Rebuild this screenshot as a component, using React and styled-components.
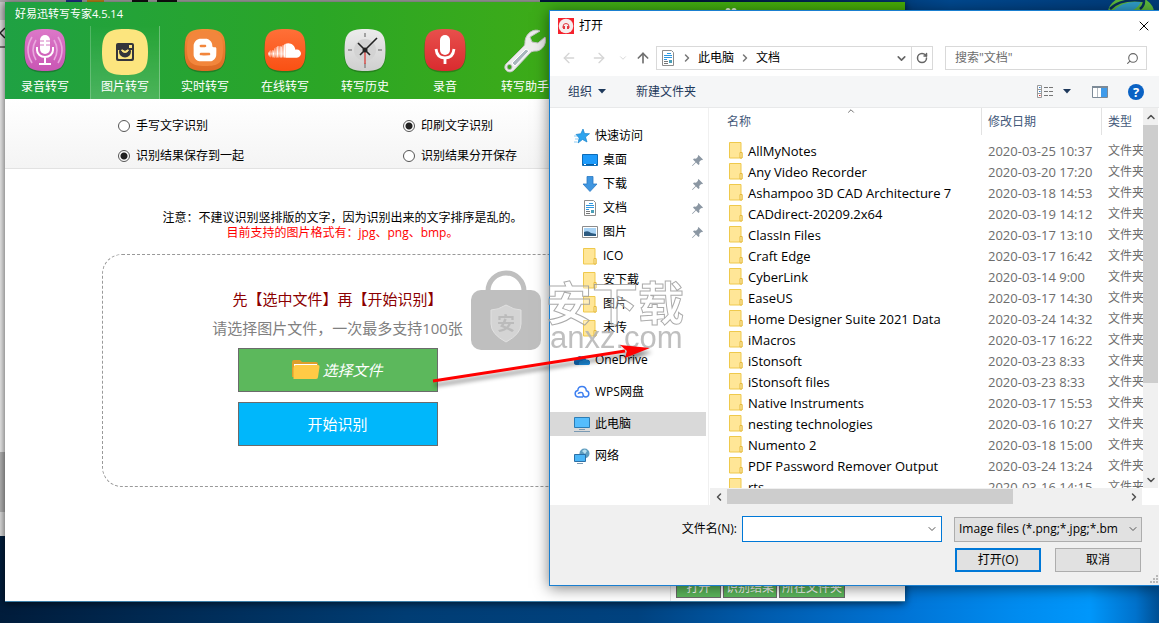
import React from 'react';
import styled, { createGlobalStyle } from 'styled-components';
import { FaBloggerB, FaSoundcloud } from 'react-icons/fa';
import { ArrowLeft, ArrowRight, ArrowUp, ChevronDown, ChevronLeft, ChevronRight, ChevronUp, RotateCw, Search, X } from 'lucide-react';

const GlobalStyle = createGlobalStyle`
  * {
    box-sizing: border-box;
  }

  body {
    margin: 0;
    background: #00234d;
    font-family: 'Open Sans', 'Noto Sans CJK SC', sans-serif;
    font-size: 12px;
    line-height: 16px;
    color: #000;
  }

  button, input, select {
    font: inherit;
    color: inherit;
    margin: 0;
    padding: 0;
  }

  svg {
    display: block;
    flex: none;
  }
`;

const Desktop = styled.div`
  position: relative;
  min-height: 100vh;
  overflow: hidden;
  background:
    linear-gradient(90deg, #001c3b 0%, #002850 12%, #003d74 35%, #00427f 55%, #005cae 66%, #0074d6 78%, #008cf0 88%, #0097fb 94%, #0072cc 98%, #004f93 100%) bottom / 100% 40% no-repeat,
    linear-gradient(90deg, #001c46 0%, #001c46 60%, #00488e 82%, #003a78 100%);
`;

/* windows */

const BackWindow = styled.div`
  position: absolute;
  left: 0;
  top: 0;
  width: 540px;
  height: 536px;
  background: linear-gradient(#c8c8c8 0 20px, #e4e4e4 20px 46px, #777 46px 48px, #ededed 48px 452px, #b4b4b4 452px 512px, #ddd 512px 536px);
`;

const BackStrip = styled.div`
  height: 2px;
  margin-bottom: 22px;
  background: linear-gradient(90deg, #a9a9a9 0 66px, #22308c 66px 82px, #a9a9a9 82px 87px, #c48a1c 87px 104px, #a9a9a9 104px 132px, #111 132px 148px, #a9a9a9 148px 157px, #111 157px 177px, #a9a9a9 177px);
`;

const Orb = styled.svg`
  position: absolute;
  right: 4px;
  top: 0;
`;

const AppWindow = styled.main`
  position: absolute;
  left: 5px;
  right: 254px;
  top: 2px;
  bottom: 21px;
  display: flex;
  flex-direction: column;
  background: #fff;
  border-bottom: 1px solid #3d7fa8;
  box-shadow: 0 1px 8px rgba(0, 0, 0, 0.7);
`;

const AppHeader = styled.header`
  background: linear-gradient(90deg, #1fa143, #2ba626 35%, #3dab18 60%, #47ac06);
  color: #fff;
`;

const AppTitle = styled.div`
  display: flex;
  align-items: center;
  justify-content: space-between;
  height: 24px;
  padding: 0 168px 0 10px;
  font-size: 11px;
`;

const Tabs = styled.nav`
  display: flex;
  gap: 10px;
  padding-left: 5px;
`;

const Tab = styled.button`
  width: 70px;
  height: 73px;
  padding-top: 3px;
  border: 0;
  border-left: 1px solid ${(p) => (p.$active ? 'rgba(255, 255, 255, 0.2)' : 'transparent')};
  border-right: 1px solid ${(p) => (p.$active ? 'rgba(255, 255, 255, 0.3)' : 'transparent')};
  background: ${(p) => (p.$active ? 'linear-gradient(rgba(255, 255, 255, 0), rgba(255, 255, 255, 0.18))' : 'none')};
  display: flex;
  flex-direction: column;
  align-items: center;
  white-space: nowrap;
`;

const TabIcon = styled.span`
  height: 50px;
`;

const Options = styled.form`
  display: grid;
  grid-template-columns: 285px 285px;
  align-content: start;
  row-gap: 14px;
  height: 70px;
  padding: 19px 0 0 113px;
  background: linear-gradient(#fff, #f4f4f4);
  border-bottom: 1px solid #e2e2e2;
`;

const Option = styled.label`
  display: flex;
  align-items: center;
  gap: 6px;
  height: 16px;
`;

const Radio = styled.input`
  appearance: none;
  width: 12px;
  height: 12px;
  border: 1px solid #555;
  border-radius: 50%;
  background: ${(p) => (p.defaultChecked ? 'radial-gradient(circle, #222 0 3px, #fff 4px)' : '#fff')};
`;

const Work = styled.div`
  flex: 1;
  display: flex;
`;

const WorkPane = styled.section`
  flex: 1;
  padding-top: 41px;
  border-right: 1px solid #e6e6e6;
`;

const Note = styled.p`
  margin: 0;
  padding-left: 10px;
  text-align: center;
  line-height: 15px;
  color: ${(p) => (p.$warn ? '#f00' : '#000')};
`;

const DropArea = styled.div`
  max-width: 471px;
  margin: 14px auto 0;
  padding: 32px 20px 40px;
  display: flex;
  flex-direction: column;
  align-items: center;
  border: 1px dashed #999;
  border-radius: 20px;
`;

const Lead = styled.p`
  margin: 0 0 4px;
  font-size: 15px;
  line-height: 25px;
  color: ${(p) => (p.$strong ? '#8b0000' : '#808080')};
`;

const BigButton = styled.button`
  width: 200px;
  height: 44px;
  margin-top: ${(p) => (p.$pick ? '3px' : '10px')};
  display: flex;
  align-items: center;
  justify-content: center;
  gap: 2px;
  border: 1px solid #6b6b6b;
  background: ${(p) => (p.$pick ? '#5cb85c' : '#00b7fb')};
  color: #fff;
  font-size: 15px;
  font-style: ${(p) => (p.$pick ? 'italic' : 'normal')};
`;

const ResultPane = styled.aside`
  width: 234px;
  padding: 0 0 3px 5px;
  display: flex;
  align-items: flex-end;
  gap: 2px;
`;

const ResultButton = styled.button`
  min-width: 45px;
  height: 20px;
  padding: 0 2px;
  border: 1px solid #6b6b6b;
  background: #5cb85c;
  color: #fff;
`;

/* file dialog */

const Dialog = styled.section`
  position: absolute;
  left: 549px;
  right: 0;
  top: 10px;
  background: #fff;
  border: 1px solid #1a7fd0;
  border-right: 0;
  box-shadow: 0 2px 14px rgba(0, 0, 0, 0.5);
`;

const DialogTitle = styled.header`
  display: flex;
  align-items: center;
  gap: 5px;
  height: 29px;
  padding: 0 7px 0 8px;
`;

const TitleText = styled.h1`
  flex: 1;
  margin: 0;
  font-size: 12px;
  font-weight: 400;
`;

const IconButton = styled.button`
  display: flex;
  align-items: center;
  justify-content: center;
  min-width: ${(p) => (p.$wide ? '24px' : '12px')};
  height: 20px;
  border: 0;
  background: none;
  color: ${(p) => p.$color || '#666'};
`;

const NavRow = styled.div`
  display: flex;
  align-items: center;
  height: 36px;
  padding: 0 12px 0 7px;
`;

const Arrows = styled.div`
  display: flex;
  align-items: center;
  gap: 6px;
  width: 99px;
`;

const Address = styled.div`
  flex: 1;
  display: flex;
  align-items: center;
  gap: 5px;
  height: 24px;
  padding-left: 3px;
  border: 1px solid #d9d9d9;
`;

const Crumb = styled.a`
  color: #000;
  text-decoration: none;
`;

const AddressEnd = styled.div`
  display: flex;
  align-items: center;
  margin-left: auto;
  height: 22px;
`;

const RefreshBox = styled.span`
  width: 21px;
  height: 22px;
  margin-left: 3px;
  display: flex;
  align-items: center;
  justify-content: center;
  border-left: 1px solid #d9d9d9;
`;

const SearchBox = styled.label`
  width: 202px;
  height: 24px;
  margin-left: 12px;
  padding: 0 7px 0 9px;
  display: flex;
  align-items: center;
  border: 1px solid #d9d9d9;
  color: #666;
`;

const SearchInput = styled.input`
  flex: 1;
  min-width: 0;
  border: 0;
  outline: 0;
  background: none;

  &::placeholder {
    color: #6d6d6d;
    opacity: 1;
  }
`;

const Toolbar = styled.div`
  display: flex;
  align-items: center;
  height: 32px;
  padding: 0 15px 0 18px;
  background: #f5f6f7;
  border-bottom: 1px solid #e8e9ea;
`;

const ToolButton = styled.button`
  display: flex;
  align-items: center;
  gap: ${(p) => (p.$loose ? '9px' : '6px')};
  margin-right: ${(p) => p.$after || 0}px;
  border: 0;
  background: none;
  color: #1e395b;
`;

const Spacer = styled.span`
  flex: 1;
`;

const DialogBody = styled.div`
  display: flex;
`;

const Sidebar = styled.nav`
  width: 159px;
  padding: 16px 2px 0 0;
  border-right: 1px solid #f0f0f0;
`;

const Place = styled.a`
  display: flex;
  align-items: center;
  gap: 5px;
  height: 24px;
  margin-top: ${(p) => (p.$apart ? '8px' : '0')};
  padding: 0 3px 0 ${(p) => (p.$nested ? '32px' : '24px')};
  background: ${(p) => (p.$current ? '#d9d9d9' : 'none')};
  color: #000;
  text-decoration: none;
`;

const PlaceName = styled.span`
  flex: 1;
`;

const Listing = styled.div`
  flex: 1;
  min-width: 0;
  padding-left: 1px;
`;

const ListRow = styled.div`
  display: flex;
`;

const ListView = styled.div`
  flex: 1;
  min-width: 0;
  height: 380px;
  overflow: hidden;
`;

const FileTable = styled.table`
  width: 100%;
  table-layout: fixed;
  border-collapse: collapse;
  white-space: nowrap;

  th, td {
    padding: 0;
    text-align: left;
    font-weight: 400;
    overflow: hidden;
  }

  th {
    height: 32px;
    vertical-align: top;
    color: #44597a;
  }

  td {
    height: 21px;
    color: #6d6d6d;
  }
`;

const DateCol = styled.col`
  width: 120px;
`;

const TypeCol = styled.col`
  width: 41px;
`;

const HeadCell = styled.div`
  position: relative;
  height: 27px;
  padding-left: ${(p) => (p.$first ? '17px' : '6px')};
  line-height: 27px;
  border-right: ${(p) => (p.$last ? '0' : '1px solid #e2e2e2')};
`;

const SortMark = styled.span`
  position: absolute;
  left: 50%;
  top: -2px;
`;

const NameCell = styled.div`
  display: flex;
  align-items: center;
  gap: 5px;
  padding-left: 19px;
  color: #000;
  font-size: 13px;
`;

const Stamp = styled.div`
  padding-left: 6px;
  font-size: ${(p) => (p.$latin ? '13px' : '12px')};
`;

const VScroll = styled.div`
  width: 15px;
  margin-right: 1px;
  display: flex;
  flex-direction: column;
  align-items: center;
  background: #f0f0f0;
`;

const HScroll = styled.div`
  display: flex;
  align-items: center;
  height: 17px;
  margin-right: 17px;
  background: #f0f0f0;
`;

const ScrollButton = styled.button`
  width: 17px;
  height: 17px;
  display: flex;
  align-items: center;
  justify-content: center;
  border: 0;
  background: none;
  color: #505050;
`;

const VThumb = styled.div`
  width: 100%;
  height: 258px;
  margin-bottom: auto;
  background: #cdcdcd;
`;

const HThumb = styled.div`
  width: 286px;
  height: 15px;
  margin-right: auto;
  background: #cdcdcd;
`;

const DialogFooter = styled.footer`
  position: relative;
  display: flex;
  flex-direction: column;
  gap: 6px;
  padding: 11px 17px 13px;
  background: #f0f0f0;
`;

const FooterRow = styled.div`
  display: flex;
  justify-content: flex-end;
  align-items: center;
`;

const NameLabel = styled.label`
  margin-right: 5px;
`;

const Combo = styled.div`
  width: 200px;
  height: 26px;
  margin-right: 12px;
  display: flex;
  align-items: center;
  padding: 0 3px;
  border: 1px solid #0078d7;
  background: #fff;
`;

const ComboInput = styled.input`
  flex: 1;
  min-width: 0;
  border: 0;
  outline: 0;
`;

const TypePicker = styled.div`
  display: grid;
  width: 188px;
  align-items: center;

  > * {
    grid-area: 1 / 1;
  }

  > svg {
    justify-self: end;
    margin-right: 3px;
    pointer-events: none;
  }
`;

const TypeSelect = styled.select`
  appearance: none;
  width: 100%;
  height: 25px;
  padding: 0 20px 0 4px;
  border: 1px solid #adadad;
  border-radius: 0;
  background: #e1e1e1;
`;

const DialogButton = styled.button`
  width: 86px;
  height: 24px;
  margin: 0 1px 0 13px;
  border: ${(p) => (p.$primary ? '2px solid #0078d7' : '1px solid #adadad')};
  background: #e1e1e1;
`;

const Grip = styled.svg`
  position: absolute;
  right: 1px;
  bottom: 2px;
`;

/* overlay marks */

const Watermark = styled.div`
  position: absolute;
  left: 470px;
  top: 268px;
  display: flex;
  gap: 4px;
  opacity: 0.85;
  pointer-events: none;
`;

const MarkText = styled.div`
  padding-top: 12px;
  color: #b4b4b4;
  font-family: 'Liberation Sans', 'Noto Sans CJK SC', sans-serif;
`;

const MarkTitle = styled.div`
  font-size: 46px;
  line-height: 48px;
  font-weight: 700;
  color: rgba(255, 255, 255, 0.4);
  -webkit-text-stroke: 1px #9c9c9c;
`;

const MarkSite = styled.div`
  padding-left: 4px;
  font-size: 31px;
  line-height: 20px;
`;

const Pointer = styled.svg`
  position: absolute;
  left: 425px;
  top: 335px;
  pointer-events: none;
  filter: drop-shadow(2px 4px 2px rgba(0, 0, 0, 0.45));
`;

/* drawings */

const Tile = ({ id, from, to, size = 42, children }) => (
  <svg width={size} height={size + 2} viewBox="0 0 42 44">
    <defs>
      <linearGradient id={id} x1="0" y1="0" x2="0" y2="1">
        <stop offset="0" stopColor={from} />
        <stop offset="1" stopColor={to} />
      </linearGradient>
    </defs>
    <path d="M21 2C37 2 42 6 42 22S37 43.500 21 43.500 0 38 0 22 5 2 21 2Z" fill="rgba(0,0,0,.22)" />
    <path d="M21 0C37 0 41.500 4 41.500 21S37 42 21 42 .5 38 .5 21 5 0 21 0Z" fill={`url(#${id})`} />
    {children}
  </svg>
);

const VoiceIcon = () => (
  <Tile id="voice" from="#dc78c8" to="#c956b4">
    <g fill="none" stroke="#e9a9de" strokeWidth="1.600">
      <path d="M12 11Q6 21 12 31M8 8Q0 21 8 34M30 11Q36 21 30 31M34 8Q42 21 34 34" />
    </g>
    <rect x="16" y="6" width="10" height="19" rx="5" fill="#fff" />
    <path d="M16 12h4M16 16h4M22 12h4M22 16h4" stroke="#d478c2" />
    <path d="M13 18v3a8 7 0 0 0 16 0v-3M21 28v6M15 35h12" fill="none" stroke="#fff" strokeWidth="2" />
  </Tile>
);

const PhotoIcon = () => (
  <svg width="46" height="46" viewBox="0 0 46 46">
    <path d="M23 0C41 0 46 5 46 23S41 46 23 46 0 41 0 23 5 0 23 0Z" fill="#fce57e" />
    <rect x="14" y="14" width="18" height="18" rx="2" fill="#34353b" />
    <path d="M16 21h14v8a1 1 0 0 1-1 1H17a1 1 0 0 1-1-1Z" fill="#fce57e" />
    <circle cx="23" cy="22.500" r="6" fill="#34353b" />
    <path d="M19.500 21h1.500a2.200 2.200 0 0 0 4 0h1.500a3.700 3.700 0 0 1-7 0Z" fill="#fce57e" stroke="#fce57e" />
    <rect x="27" y="16" width="3" height="3" fill="#fce57e" />
  </svg>
);

const LiveIcon = () => (
  <Tile id="live" from="#f38a38" to="#dd6a25">
    <path d="M21 2C35 2 39 6 39 20S35 37 21 37 3 33 3 20 7 2 21 2Z" fill="#f2863c" />
    <FaBloggerB x="8" y="8" size="26" color="#fff" />
  </Tile>
);

const OnlineIcon = () => (
  <Tile id="online" from="#ff7038" to="#f95013">
    <FaSoundcloud x="4" y="5" size="33" color="#fff" />
  </Tile>
);

const HistoryIcon = () => (
  <Tile id="history" from="#ececec" to="#cfcfcf">
    <circle cx="21" cy="21" r="11" fill="#d3d3d3" />
    <path d="M21 4v4M21 34v5M4 21h4M34 21h4" stroke="#8a8a8a" strokeWidth="1.500" />
    <path d="M21 21v14" stroke="#d8504c" strokeWidth="1.500" />
    <path d="M16 26 33 9M26 26 14 14" stroke="#222" strokeWidth="1.600" />
    <circle cx="21" cy="21" r="2.500" fill="#222" />
  </Tile>
);

const RecordIcon = () => (
  <Tile id="record" from="#e8504c" to="#d92b2f">
    <rect x="16" y="6" width="10" height="20" rx="5" fill="#fff" />
    <path d="M12 20q1 9 9 9t9-9M21 29v6" fill="none" stroke="#fff" strokeWidth="2.800" />
  </Tile>
);

const WrenchIcon = () => (
  <svg width="42" height="44" viewBox="0 0 42 44">
    <path d="M36 2C30-1 22 4 21 12c0 3 0 4-2 6L2 35c-4 5 3 11 8 6l16-17c2-2 4-2 7-2 6-1 10-8 8-14l-7 6-6-1-2-5Z" fill="#ededed" stroke="#c4c4c4" />
    <path d="m22 20-14 14 3 3 14-15Z" fill="#a9b7bd" stroke="#fff" />
    <circle cx="5.500" cy="38" r="2.500" fill="#3aa51c" stroke="#bbb" />
  </svg>
);

const UserMark = () => (
  <svg width="12" height="12" viewBox="0 0 12 12" fill="#e4f3da">
    <circle cx="3" cy="2.500" r="2.500" />
    <circle cx="9" cy="2.500" r="2.500" />
    <path d="M0 11q0-5 3-5t3 5q0-5 3-5t3 5Z" />
  </svg>
);

const Folder = () => (
  <svg width="14" height="17" viewBox="0 0 14 17">
    <path d="M.5.500h11.500v10h1v5.500H.5Z" fill="#ffe697" stroke="#efc94c" />
    <path d="M11 10.500h2V16h-2Z" fill="#fff0b8" stroke="#e5b93c" />
  </svg>
);

const OpenFolder = () => (
  <svg width="28" height="20" viewBox="0 0 28 20">
    <path d="M0 2q0-2 2-2h6l2 2h14q2 0 2 2v13H0Z" fill="#dd9f2b" />
    <path d="M2 4h23v5H2Z" fill="#fff" />
    <path d="M4 5h22q2 0 1.500 2L26 17q0 2-2 2H1.500V8Q2 5 4 5Z" fill="#ffca45" />
  </svg>
);

const NestedFolder = () => (
  <svg width="16" height="17" viewBox="-1 0 16 17">
    <path d="M.5.500h11.500v10h1v5.500H.5Z" fill="#ffe697" stroke="#efc94c" />
    <path d="M11 10.500h2V16h-2Z" fill="#fff0b8" stroke="#e5b93c" />
  </svg>
);

const Star = () => (
  <svg width="16" height="16" viewBox="0 0 16 16">
    <path d="m9 1 1.500 4.500 5 .2-4 3.300 1.500 5-4.500-2.500L4 15l1.200-5L2 6.500l4.800-.8Z" fill="#2fa4ee" stroke="#1782cc" strokeWidth=".7" />
    <path d="M0 8h3M1 11h3M0 14h3" stroke="#8ecbf3" />
  </svg>
);

const DesktopIcon = () => (
  <svg width="16" height="16" viewBox="0 0 16 16">
    <path d="M.5 2.500h15v11H.5Z" fill="#1e9bfb" stroke="#0c6cb8" />
    <path d="M1 12.500h14" stroke="#0b5c9f" />
    <path d="M2 12.500h2M12 12.500h2" stroke="#fff" />
  </svg>
);

const Download = () => (
  <svg width="16" height="16" viewBox="0 0 16 16">
    <path d="M5 .5h6V8h4l-7 7.500L1 8h4Z" fill="#3f96e0" stroke="#2878c4" strokeWidth=".8" />
  </svg>
);

const DocIcon = () => (
  <svg width="16" height="16" viewBox="0 0 16 16">
    <path d="M2.500.5h9l2 2v13h-11Z" fill="#fff" stroke="#8c8c8c" />
    <path d="M7 3.500h4M4 5.500h8M4 7.500h8M4 9.500h3" stroke="#2e97e0" />
    <path d="M4 11.500h4M4 13.500h4" stroke="#777" />
    <path d="M9 10h3v3H9Z" fill="#4a9fb8" />
  </svg>
);

const PictureIcon = () => (
  <svg width="16" height="16" viewBox="0 0 16 16">
    <path d="M.5 2.500h15v11H.5Z" fill="#fff" stroke="#8c8c8c" />
    <path d="M2 4h12v8H2Z" fill="#a8d3f5" />
    <path d="M2 8q4-2 7 1l5 1v2H2Z" fill="#2c5a80" />
  </svg>
);

const OneDrive = () => (
  <svg width="16" height="16" viewBox="0 0 16 16">
    <path d="M3 13a3 3 0 0 1-.5-6Q4 3 7.500 4.500 11 3 12 7.500q4 0 4 3Q16 13 13.500 13Z" fill="#0f6cbd" />
    <path d="M5 13q-1-4 3-4 4-3 8 1 0 3-2.500 3Z" fill="#1e8fe1" />
  </svg>
);

const WpsCloud = () => (
  <svg width="16" height="16" viewBox="0 0 16 16" fill="none" stroke="#3d7ff0" strokeWidth="1.500">
    <path d="M9 13H4a3.300 3.300 0 0 1-.2-6.500Q4 2.500 8 2.500t4.300 4.200A3.200 3.200 0 0 1 12 13q-3 0-3-2.500T6.500 8.500 4.500 10" />
  </svg>
);

const Monitor = () => (
  <svg width="16" height="16" viewBox="0 0 16 16">
    <path d="M.5 1.500h15v10H.5Z" fill="#55bdfd" stroke="#2b7cb5" />
    <path d="M5 13.500h6M0 15.500h16" stroke="#7b9ab3" />
  </svg>
);

const Network = () => (
  <svg width="16" height="16" viewBox="0 0 16 16">
    <circle cx="10.500" cy="5.500" r="5" fill="#5f9dbf" />
    <path d="M8 3q3-3 5 0l-2 3Z" fill="#b9dfee" />
    <path d="M.5 6.500h11v7H.5Z" fill="#4bb6f7" stroke="#2c6fa5" />
    <path d="M3 15.500h6" stroke="#7b9ab3" />
  </svg>
);

const Pin = () => (
  <svg width="11" height="11" viewBox="0 0 11 11">
    <path d="m6.500 0 4.500 4.500-1 .7-.8-.2-2 2 .3 2-1 1L4 7.500.5 11 0 10.500 3.500 7 1 4.500l1-1 2 .3 2-2-.2-.8Z" fill="#8b97a3" />
  </svg>
);

const DialogLogo = () => (
  <svg width="16" height="16" viewBox="0 0 16 16">
    <path d="M0 0h16v16H0Z" fill="#f5222d" />
    <circle cx="8" cy="8" r="7.300" fill="#f6eeee" />
    <path d="M5 10V8.500a3 3 0 0 1 6 0V10" fill="none" stroke="#e33a40" />
    <path d="M5 8h2v3H5ZM9 8h2v3H9Z" fill="#e33a40" />
  </svg>
);

const Caret = () => (
  <svg width="8" height="5" viewBox="0 0 8 5">
    <path d="M0 0h8L4 4.500Z" fill="#1e395b" />
  </svg>
);

const ViewIcon = () => (
  <svg width="17" height="13" viewBox="0 0 17 13">
    <path d="M.5.500h4v12h-4ZM.5 4.500h4M.5 8.500h4" fill="#fff" stroke="#999" />
    <path d="M2 2h1.500v1H2ZM2 6h1.500v1H2Z" fill="#2e7fd0" />
    <path d="M2 10h1.500v1H2Z" fill="#d33" />
    <path d="M7 2.500h4M12 2.500h4M7 6.500h4M12 6.500h4M7 10.500h4M12 10.500h4" stroke="#777" />
  </svg>
);

const PaneIcon = () => (
  <svg width="16" height="12" viewBox="0 0 16 12">
    <path d="M.5.500h15v11H.5Z" fill="#fff" stroke="#7c8a97" />
    <path d="M0 1h16" stroke="#7c8a97" strokeWidth="2" />
    <path d="M5.500 2v9" stroke="#b5bcc3" />
    <path d="M9 2h6v9H9Z" fill="#3f9bea" />
  </svg>
);

const HelpMark = styled.span`
  width: 16px;
  height: 16px;
  border-radius: 50%;
  background: #0a62c4;
  color: #fff;
  font-size: 13px;
  font-weight: 700;
  line-height: 16px;
  text-align: center;
`;

const tabs = [
  ['录音转写', VoiceIcon],
  ['图片转写', PhotoIcon],
  ['实时转写', LiveIcon],
  ['在线转写', OnlineIcon],
  ['转写历史', HistoryIcon],
  ['录音', RecordIcon],
  ['转写助手', WrenchIcon],
];

const options = [
  ['mode', '手写文字识别', false],
  ['mode', '印刷文字识别', true],
  ['save', '识别结果保存到一起', true],
  ['save', '识别结果分开保存', false],
];

const places = [
  { name: '快速访问', icon: Star },
  { name: '桌面', icon: DesktopIcon, nested: true, pin: true },
  { name: '下载', icon: Download, nested: true, pin: true },
  { name: '文档', icon: DocIcon, nested: true, pin: true },
  { name: '图片', icon: PictureIcon, nested: true, pin: true },
  { name: 'ICO', icon: NestedFolder, nested: true },
  { name: '安下载', icon: NestedFolder, nested: true },
  { name: '图片', icon: NestedFolder, nested: true },
  { name: '未传', icon: NestedFolder, nested: true },
  { name: 'OneDrive', icon: OneDrive, apart: true },
  { name: 'WPS网盘', icon: WpsCloud, apart: true },
  { name: '此电脑', icon: Monitor, apart: true, current: true },
  { name: '网络', icon: Network, apart: true },
];

const files = [
  ['AllMyNotes', '2020-03-25 10:37'],
  ['Any Video Recorder', '2020-03-20 17:20'],
  ['Ashampoo 3D CAD Architecture 7', '2020-03-18 14:53'],
  ['CADdirect-20209.2x64', '2020-03-19 14:12'],
  ['ClassIn Files', '2020-03-17 13:10'],
  ['Craft Edge', '2020-03-17 16:42'],
  ['CyberLink', '2020-03-14 9:00'],
  ['EaseUS', '2020-03-17 14:30'],
  ['Home Designer Suite 2021 Data', '2020-03-24 14:32'],
  ['iMacros', '2020-03-17 16:22'],
  ['iStonsoft', '2020-03-23 8:33'],
  ['iStonsoft files', '2020-03-23 8:33'],
  ['Native Instruments', '2020-03-17 15:53'],
  ['nesting technologies', '2020-03-16 10:27'],
  ['Numento 2', '2020-03-18 15:00'],
  ['PDF Password Remover Output', '2020-03-24 13:24'],
  ['rts', '2020-03-16 14:15'],
];

const Recognizer = () => (
  <AppWindow>
    <AppHeader>
      <AppTitle>好易迅转写专家4.5.14<UserMark /></AppTitle>
      <Tabs>
        {tabs.map(([name, Icon], i) => (
          <Tab key={name} type="button" $active={i === 1}>
            <TabIcon><Icon /></TabIcon>
            {name}
          </Tab>
        ))}
      </Tabs>
    </AppHeader>

    <Options>
      {options.map(([group, text, checked]) => (
        <Option key={text}>
          <Radio type="radio" name={group} defaultChecked={checked} />
          {text}
        </Option>
      ))}
    </Options>

    <Work>
      <WorkPane>
        <Note>注意：不建议识别竖排版的文字，因为识别出来的文字排序是乱的。</Note>
        <Note $warn>目前支持的图片格式有：jpg、png、bmp。</Note>
        <DropArea>
          <Lead $strong>先【选中文件】再【开始识别】</Lead>
          <Lead>请选择图片文件，一次最多支持100张</Lead>
          <BigButton type="button" $pick><OpenFolder />选择文件</BigButton>
          <BigButton type="button">开始识别</BigButton>
        </DropArea>
      </WorkPane>
      <ResultPane>
        <ResultButton type="button">打开</ResultButton>
        <ResultButton type="button">识别结果</ResultButton>
        <ResultButton type="button">所在文件夹</ResultButton>
      </ResultPane>
    </Work>
  </AppWindow>
);

const FileDialog = () => (
  <Dialog>
    <DialogTitle>
      <DialogLogo />
      <TitleText>打开</TitleText>
      <IconButton type="button" $color="#000" aria-label="关闭"><X size={16} strokeWidth={1.5} /></IconButton>
    </DialogTitle>

    <NavRow>
      <Arrows>
        <IconButton type="button" $wide $color="#d5d5d5" aria-label="后退"><ArrowLeft size={16} /></IconButton>
        <IconButton type="button" $wide $color="#d5d5d5" aria-label="前进"><ArrowRight size={16} /></IconButton>
        <IconButton type="button" $color="#d0d0d0" aria-label="最近"><ChevronDown size={10} /></IconButton>
        <IconButton type="button" $color="#707070" aria-label="上移"><ArrowUp size={16} strokeWidth={2.5} /></IconButton>
      </Arrows>
      <Address>
        <DocIcon />
        <ChevronRight size={12} color="#777" strokeWidth={3} />
        <Crumb href="#pc">此电脑</Crumb>
        <ChevronRight size={12} color="#777" strokeWidth={3} />
        <Crumb href="#docs">文档</Crumb>
        <AddressEnd>
          <IconButton type="button" aria-label="历史"><ChevronDown size={13} strokeWidth={3} /></IconButton>
          <RefreshBox>
            <IconButton type="button" aria-label="刷新"><RotateCw size={12} strokeWidth={3} /></IconButton>
          </RefreshBox>
        </AddressEnd>
      </Address>
      <SearchBox>
        <SearchInput type="text" placeholder={'搜索"文档"'} />
        <Search size={13} transform="scale(-1 1)" />
      </SearchBox>
    </NavRow>

    <Toolbar>
      <ToolButton type="button" $after={30}>组织<Caret /></ToolButton>
      <ToolButton type="button">新建文件夹</ToolButton>
      <Spacer />
      <ToolButton type="button" $loose $after={21} aria-label="视图"><ViewIcon /><Caret /></ToolButton>
      <ToolButton type="button" $after={20} aria-label="预览窗格"><PaneIcon /></ToolButton>
      <ToolButton type="button" aria-label="帮助"><HelpMark>?</HelpMark></ToolButton>
    </Toolbar>

    <DialogBody>
      <Sidebar>
        {places.map(({ name, icon: Icon, nested, apart, current, pin }, i) => (
          <Place key={i} href={`#place-${i}`} $nested={nested} $apart={apart} $current={current}>
            <Icon />
            <PlaceName>{name}</PlaceName>
            {pin && <Pin />}
          </Place>
        ))}
      </Sidebar>

      <Listing>
        <ListRow>
          <ListView>
            <FileTable>
              <colgroup>
                <col />
                <DateCol />
                <TypeCol />
              </colgroup>
              <thead>
                <tr>
                  <th>
                    <HeadCell $first>
                      名称
                      <SortMark><ChevronUp size={10} color="#555" /></SortMark>
                    </HeadCell>
                  </th>
                  <th><HeadCell>修改日期</HeadCell></th>
                  <th><HeadCell $last>类型</HeadCell></th>
                </tr>
              </thead>
              <tbody>
                {files.map(([name, date]) => (
                  <tr key={name}>
                    <td><NameCell><Folder />{name}</NameCell></td>
                    <td><Stamp $latin>{date}</Stamp></td>
                    <td><Stamp>文件夹</Stamp></td>
                  </tr>
                ))}
              </tbody>
            </FileTable>
          </ListView>
          <VScroll>
            <ScrollButton type="button" aria-label="向上"><ChevronUp size={12} strokeWidth={3} /></ScrollButton>
            <VThumb />
            <ScrollButton type="button" aria-label="向下"><ChevronDown size={12} strokeWidth={3} /></ScrollButton>
          </VScroll>
        </ListRow>
        <HScroll>
          <ScrollButton type="button" aria-label="向左"><ChevronLeft size={12} strokeWidth={3} /></ScrollButton>
          <HThumb />
          <ScrollButton type="button" aria-label="向右"><ChevronRight size={12} strokeWidth={3} /></ScrollButton>
        </HScroll>
      </Listing>
    </DialogBody>

    <DialogFooter>
      <FooterRow>
        <NameLabel htmlFor="file-name">文件名(N):</NameLabel>
        <Combo>
          <ComboInput id="file-name" type="text" />
          <ChevronDown size={12} color="#555" />
        </Combo>
        <TypePicker>
          <TypeSelect aria-label="文件类型">
            <option>Image files (*.png;*.jpg;*.bm</option>
          </TypeSelect>
          <ChevronDown size={12} color="#555" />
        </TypePicker>
      </FooterRow>
      <FooterRow>
        <DialogButton type="button" $primary>打开(O)</DialogButton>
        <DialogButton type="button">取消</DialogButton>
      </FooterRow>
      <Grip width="8" height="8" viewBox="0 0 8 8" fill="#b8b8b8">
        <path d="M6 0h2v2H6ZM3 3h2v2H3ZM6 3h2v2H6ZM0 6h2v2H0ZM3 6h2v2H3ZM6 6h2v2H6Z" />
      </Grip>
    </DialogFooter>
  </Dialog>
);

const App = () => (
  <Desktop>
    <GlobalStyle />
    <BackWindow>
      <BackStrip />
      <svg width="5" height="18" viewBox="0 0 5 18">
        <path d="M5 4 0 9l5 5" fill="none" stroke="#222" strokeWidth="1.500" />
      </svg>
    </BackWindow>
    <Orb width="48" height="20" viewBox="0 0 48 20">
      <ellipse cx="24" cy="12" rx="23" ry="16" fill="#5cb83c" />
      <path d="M5 12Q16 0 34 2q-4 8-14 10Z" fill="#2f9cc8" />
      <path d="M3 9Q14-2 37 1q0 5-4 8" fill="none" stroke="#052f5c" strokeWidth="2.500" />
    </Orb>
    <Recognizer />
    <FileDialog />

    <Watermark>
      <svg width="72" height="84" viewBox="0 0 72 84">
        <path d="M18 23a18 18 0 0 1 36 0" fill="none" stroke="#b4b4b4" strokeWidth="5" />
        <rect x="1" y="22" width="70" height="60" rx="10" fill="#b4b4b4" />
        <path d="M36 37q8 5 15 5v14q0 10-15 18-15-8-15-18V42q7 0 15-5Z" fill="#cdcdcd" stroke="#dcdcdc" />
        <text x="36" y="62" textAnchor="middle" fontSize="18" fontWeight="700" fill="#b0b0b0">安</text>
      </svg>
      <MarkText>
        <MarkTitle>安下载</MarkTitle>
        <MarkSite>anxz.com</MarkSite>
      </MarkText>
    </Watermark>

    <Pointer width="240" height="60" viewBox="0 0 240 60">
      <path d="M8 46 200 16" stroke="#f00" strokeWidth="3" />
      <path d="m195 10 30 3-25 10 2-7Z" fill="#f00" />
    </Pointer>
  </Desktop>
);

export default App;
